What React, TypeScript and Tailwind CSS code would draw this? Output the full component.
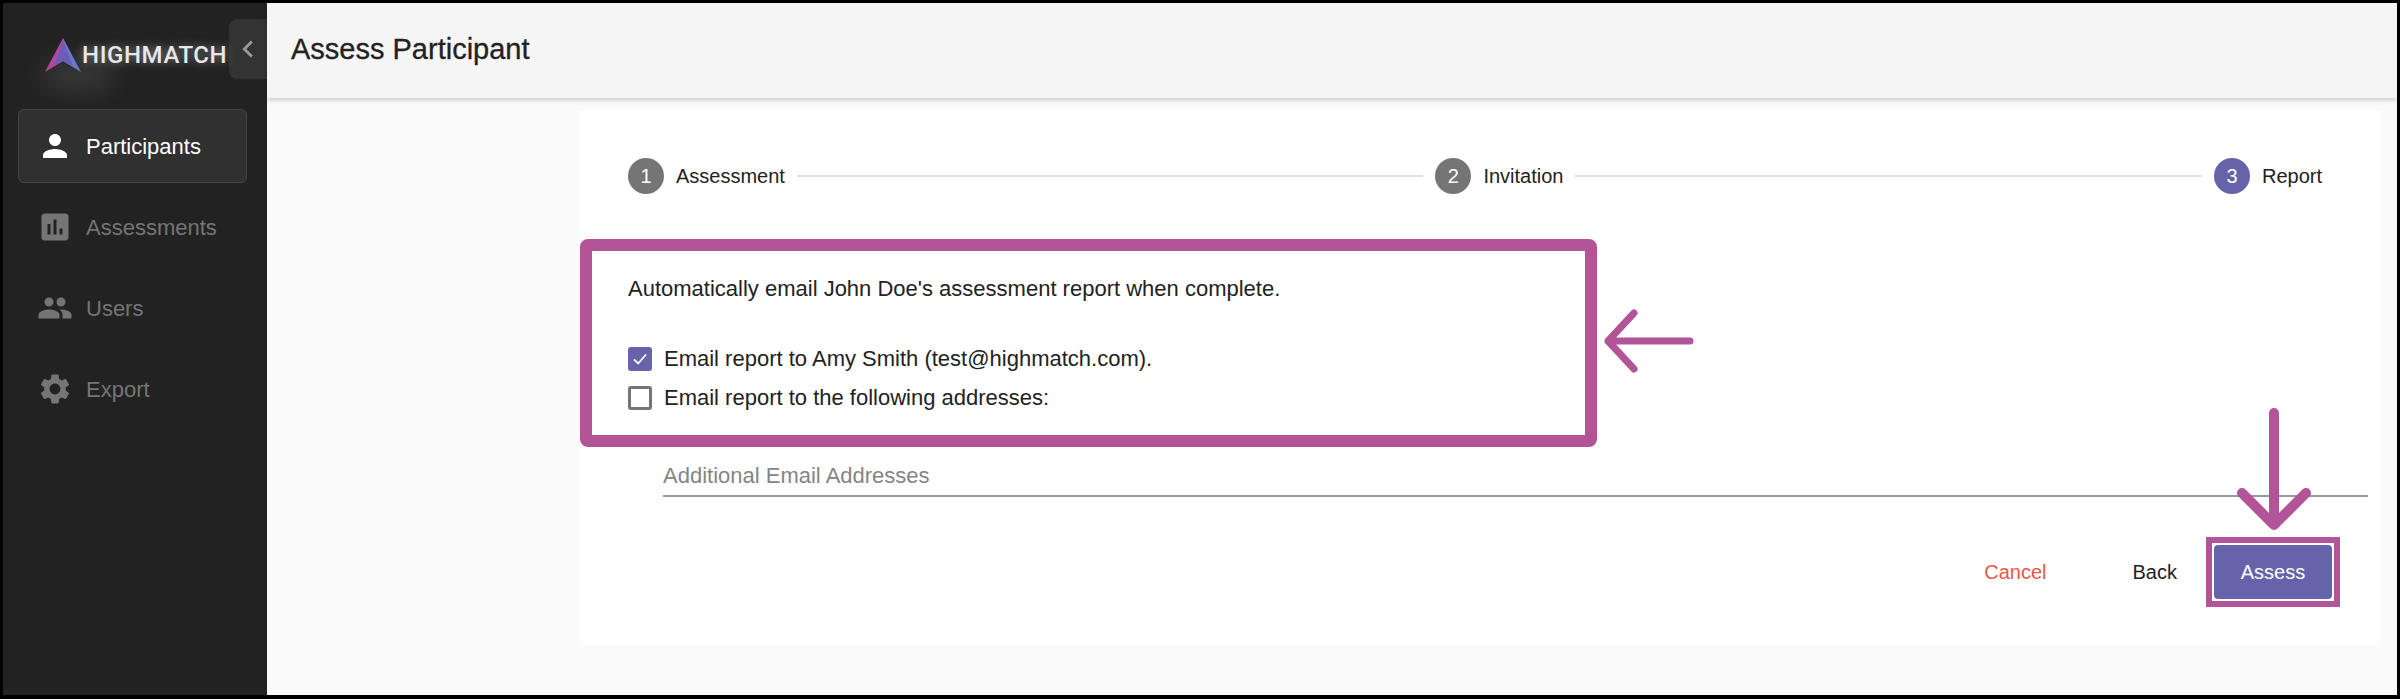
import { MdPerson, MdAssessment, MdPeople, MdSettings, MdChevronLeft } from "react-icons/md";

const navItems = [
  { name: "Participants", icon: MdPerson, active: true },
  { name: "Assessments", icon: MdAssessment, active: false },
  { name: "Users", icon: MdPeople, active: false },
  { name: "Export", icon: MdSettings, active: false },
];

function Logo() {
  return (
    <div className="relative flex h-[34px] items-center">
      <div className="absolute left-[-2px] top-[22px] h-[30px] w-[70px] rounded-full bg-white/10 blur-md" />
      <svg width="36" height="35" viewBox="0 0 36 35" className="relative">
        <polygon points="18,0 0,34 18,23" fill="#b5479a" />
        <polygon points="18,0 36,34 18,23" fill="#6c78cc" />
        <polygon points="18,2 9,28 18,23 28,28" fill="#6a5cb8" />
      </svg>
      <span className="relative ml-[1px] font-['Roboto',sans-serif] text-[24px] font-medium leading-none tracking-[0.6px] text-[#e8e8e8] [text-shadow:0_0_10px_rgba(255,255,255,0.45)]">
        HIGHMATCH
      </span>
    </div>
  );
}

function Step({ n, label, active }: { n: number; label: string; active?: boolean }) {
  return (
    <div className="flex items-center">
      <div
        className={
          active
            ? "flex h-9 w-9 items-center justify-center rounded-full bg-[#6763ab] text-[20px] text-white"
            : "flex h-9 w-9 items-center justify-center rounded-full bg-[#757575] text-[20px] text-white"
        }
      >
        {n}
      </div>
      <span className={active ? "ml-3 text-[20px] font-medium text-[#222]" : "ml-3 text-[20px] text-[#222]"}>{label}</span>
    </div>
  );
}

function Checkbox({ checked, label }: { checked?: boolean; label: string }) {
  return (
    <div className="flex h-[39px] items-center">
      {checked ? (
        <div className="flex h-6 w-6 items-center justify-center rounded-[3px] bg-[#6763ab]">
          <svg width="18" height="18" viewBox="0 0 24 24" fill="none" stroke="white" strokeWidth="2.4">
            <path d="M4 12.5 L9.5 18 L20 6" />
          </svg>
        </div>
      ) : (
        <div className="h-6 w-6 rounded-[3px] border-[3px] border-[#757575] bg-white" />
      )}
      <span className="ml-3 text-[22px] text-[#222]">{label}</span>
    </div>
  );
}

export default function App() {
  return (
    <div className="flex h-[699px] w-[2400px] overflow-hidden bg-black pb-[4px] pl-[3px] pr-[3px] pt-[3px] font-['Liberation_Sans',Arial,sans-serif]">
      <aside className="flex w-[264px] shrink-0 flex-col bg-[#222222]">
        <div className="flex h-[106px] items-start">
          <div className="ml-[42px] mt-[35px] w-[184px]">
            <Logo />
          </div>
          <div className="mt-[16px] flex h-[60px] w-[38px] items-center justify-center rounded-l-lg bg-[#333333]">
            <MdChevronLeft className="text-[#9a9a9a]" size={34} />
          </div>
        </div>
        <nav className="flex flex-col gap-[7px] px-[15px]">
          {navItems.map((item) => (
            <div
              key={item.name}
              className={
                item.active
                  ? "flex h-[74px] w-[229px] items-center rounded-md border border-[#454545] bg-[#303030] pl-[18px] text-white"
                  : "flex h-[74px] w-[229px] items-center border border-transparent pl-[18px] text-[#757575]"
              }
            >
              <item.icon size={36} className="shrink-0" />
              <span className="ml-[13px] text-[22px]">{item.name}</span>
            </div>
          ))}
        </nav>
      </aside>

      <main className="flex min-w-0 flex-1 flex-col bg-[#fafafa]">
        <header className="relative flex h-[95px] shrink-0 items-center bg-[#f5f5f5] pl-[24px] shadow-[0_2px_5px_rgba(0,0,0,0.2)]">
          <h1 className="mb-[2px] text-[29px] font-normal text-[#222] [-webkit-text-stroke:0.3px_#222]">Assess Participant</h1>
        </header>

        <div className="pl-[313px] pr-[17px] pt-[12px]">
          <section className="relative h-[535px] bg-white">
            <div className="flex items-center pl-[48px] pr-[58px] pt-[48px]">
              <Step n={1} label="Assessment" />
              <div className="mx-3 h-[2px] flex-1 bg-[#e2e2e2]" />
              <Step n={2} label="Invitation" />
              <div className="mx-3 h-[2px] flex-1 bg-[#e2e2e2]" />
              <Step n={3} label="Report" active />
            </div>

            <div className="relative mt-[45px] h-[208px] w-[1017px] rounded-lg border-[12px] border-[#b25497] pl-[36px] pt-[21px]">
              <p className="text-[22px] text-[#222]">Automatically email John Doe's assessment report when complete.</p>
              <div className="mt-[34px]">
                <Checkbox checked label="Email report to Amy Smith (test@highmatch.com)." />
                <Checkbox label="Email report to the following addresses:" />
              </div>
              <svg width="92" height="66" viewBox="0 0 92 66" className="absolute left-[1011px] top-[57px]" fill="none" stroke="#b25497" strokeWidth="7" strokeLinecap="round" strokeLinejoin="round">
                <path d="M87 33 H5 M31 5 L5 33 L31 61" />
              </svg>
            </div>

            <div className="ml-[83px] mr-[12px] mt-[12px] flex h-[38px] items-start border-b-2 border-[#9a9a9a]">
              <span className="text-[22px] text-[#858585]">Additional Email Addresses</span>
            </div>

            <div className="mr-[40px] mt-[40px] flex items-center justify-end">
              <button className="mr-[86px] text-[20px] font-medium text-[#e8584c]">Cancel</button>
              <button className="mr-[29px] text-[20px] font-medium text-[#222]">Back</button>
              <div className="h-[70px] w-[134px] border-[6px] border-[#b25497] p-[2px]">
                <button className="h-full w-full rounded-[4px] bg-[#6763ab] text-[20px] font-medium text-white">Assess</button>
              </div>
            </div>

            <svg width="74" height="126" viewBox="0 0 74 126" className="absolute left-[1657px] top-[298px]" fill="none" stroke="#b25497" strokeWidth="10" strokeLinecap="round" strokeLinejoin="round">
              <path d="M37 5 V117 M5 85 L37 117 L69 85" />
            </svg>
          </section>
        </div>
      </main>
    </div>
  );
}
